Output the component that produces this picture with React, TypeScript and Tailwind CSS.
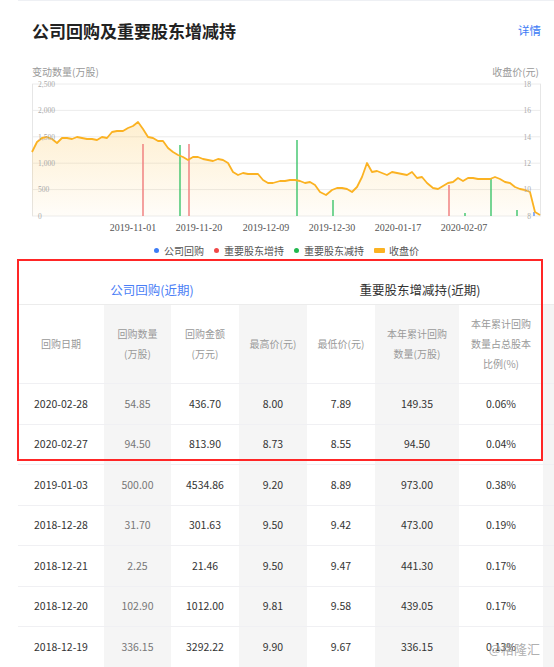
import React from 'react';

const pricePoints: [number, number][] = [
  [32, 152], [37, 142], [42, 138], [47, 137], [52, 139], [57, 143], [62, 138], [67, 138], [72, 139], [77, 137],
  [82, 138], [87, 139], [92, 139], [97, 140], [102, 137], [107, 138], [112, 132], [117, 131], [123, 131], [128, 128],
  [133, 126], [138, 122], [143, 129], [148, 137], [153, 138], [158, 141], [163, 141], [168, 148], [173, 152], [178, 155],
  [183, 157], [188, 160], [193, 157], [198, 157], [203, 159], [208, 160], [213, 161], [218, 159], [223, 160], [228, 163],
  [233, 172], [238, 175], [243, 173], [248, 174], [253, 174], [258, 174], [263, 180], [268, 183], [273, 183], [280, 181],
  [285, 181], [290, 180], [295, 180], [300, 181], [305, 183], [310, 182], [315, 185], [320, 192], [326, 195], [332, 190],
  [337, 188], [342, 188], [347, 189], [352, 192], [357, 187], [362, 177], [367, 163], [372, 172], [377, 171], [382, 173],
  [387, 175], [392, 172], [397, 173], [402, 174], [407, 175], [412, 172], [417, 178], [422, 177], [427, 183], [433, 188],
  [438, 189], [443, 186], [448, 183], [453, 182], [458, 178], [463, 181], [468, 178], [473, 178], [478, 179], [483, 179],
  [490, 179], [495, 177], [500, 179], [505, 182], [510, 183], [515, 187], [520, 189], [525, 190], [530, 192], [535, 212],
  [540, 215],
];

// x, top y, colour
const bars: [number, number, string][] = [
  [143, 144, '#f07a7a'],
  [180, 145, '#3cc46a'],
  [189, 144, '#f07a7a'],
  [297, 140, '#3cc46a'],
  [333, 200, '#3cc46a'],
  [449, 185, '#f07a7a'],
  [465, 213, '#3cc46a'],
  [491, 179, '#3cc46a'],
  [517, 210, '#3cc46a'],
  [534, 212, '#5b8ff9'],
];

const leftTicks = ['2,500', '2,000', '1,500', '1,000', '500', '0'];
const rightTicks = ['18', '16', '14', '12', '10', '8'];
const dates: [string, number][] = [
  ['2019-11-01', 133],
  ['2019-11-20', 199],
  ['2019-12-09', 266],
  ['2019-12-30', 332],
  ['2020-01-17', 398],
  ['2020-02-07', 464],
];

const rows = [
  ['2020-02-28', '54.85', '436.70', '8.00', '7.89', '149.35', '0.06%'],
  ['2020-02-27', '94.50', '813.90', '8.73', '8.55', '94.50', '0.04%'],
  ['2019-01-03', '500.00', '4534.86', '9.20', '8.89', '973.00', '0.38%'],
  ['2018-12-28', '31.70', '301.63', '9.50', '9.42', '473.00', '0.19%'],
  ['2018-12-21', '2.25', '21.46', '9.50', '9.47', '441.30', '0.17%'],
  ['2018-12-20', '102.90', '1012.00', '9.81', '9.58', '439.05', '0.17%'],
  ['2018-12-19', '336.15', '3292.22', '9.90', '9.67', '336.15', '0.13%'],
];

const cols = 'grid grid-cols-[86px_67px_68px_68px_68px_84px_84px_11px]';

function Chart() {
  const line = pricePoints.map(([x, y], i) => `${i ? 'L' : 'M'}${x} ${y}`).join(' ');
  const area = `${line} L540 216 L32 216 Z`;
  return (
    <svg width={554} height={159} viewBox="0 81 554 159" className="block">
      <defs>
        <linearGradient id="priceFill" x1="0" y1="0" x2="0" y2="1">
          <stop offset="0%" stopColor="#fbb62a" stopOpacity="0.22" />
          <stop offset="100%" stopColor="#fbb62a" stopOpacity="0.03" />
        </linearGradient>
      </defs>
      {leftTicks.map((_, i) => (
        <line key={i} x1={32} x2={541} y1={84 + i * 26.4} y2={84 + i * 26.4} stroke="#ececec" strokeWidth={1} />
      ))}
      <line x1={32.5} x2={32.5} y1={84} y2={216} stroke="#e6e6e6" />
      <line x1={540.5} x2={540.5} y1={84} y2={216} stroke="#e6e6e6" />
      <path d={area} fill="url(#priceFill)" />
      {bars.map(([x, top, c], i) => (
        <line key={i} x1={x} x2={x} y1={216} y2={top} stroke={c} strokeWidth={1.4} />
      ))}
      <path d={line} fill="none" stroke="#fbb222" strokeWidth={1.8} strokeLinejoin="round" />
      {leftTicks.map((t, i) => (
        <text key={t} x={38} y={84 + i * 26.4 + 2.8} fontSize={7.5} fill="#aaa" fontFamily="'Liberation Serif', serif">
          {t}
        </text>
      ))}
      {rightTicks.map((t, i) => (
        <text key={t} x={531} y={84 + i * 26.4 + 2.8} fontSize={7.5} fill="#aaa" textAnchor="end" fontFamily="'Liberation Serif', serif">
          {t}
        </text>
      ))}
      {dates.map(([d, x]) => (
        <text key={d} x={x} y={231} fontSize={10} fill="#555" textAnchor="middle" fontFamily="'Liberation Serif', serif">
          {d}
        </text>
      ))}
    </svg>
  );
}

function Legend() {
  return (
    <div className="ml-[32px] w-[509px] h-[20px] flex items-center justify-center gap-[10px] text-[10px] text-[#555]">
      <div className="flex items-center gap-[5px]">
        <span className="w-[5px] h-[5px] rounded-full bg-[#3d7cf5]" />
        <span>公司回购</span>
      </div>
      <div className="flex items-center gap-[5px]">
        <span className="w-[5px] h-[5px] rounded-full bg-[#f04848]" />
        <span>重要股东增持</span>
      </div>
      <div className="flex items-center gap-[5px]">
        <span className="w-[5px] h-[5px] rounded-full bg-[#22b84f]" />
        <span>重要股东减持</span>
      </div>
      <div className="flex items-center gap-[4px]">
        <span className="w-[11px] h-[5px] rounded-[1px] bg-[#fbb222]" />
        <span>收盘价</span>
      </div>
    </div>
  );
}

function Table() {
  const shade = (i: number) => (i % 2 === 1 ? 'bg-[#f5f5f5]' : '');
  const headers: React.ReactNode[] = [
    '回购日期',
    <>回购数量<br />(万股)</>,
    <>回购金额<br />(万元)</>,
    '最高价(元)',
    '最低价(元)',
    <>本年累计回购<br />数量(万股)</>,
    <>本年累计回购<br />数量占总股本<br />比例(%)</>,
    '',
  ];
  return (
    <div className="ml-[18px] w-[536px]">
      <div className="h-[45px] flex border-b border-[#ececec] text-[12.5px]">
        <div className="w-1/2 flex items-center justify-center pt-[16px] text-[#4a7ef6]">公司回购(近期)</div>
        <div className="w-1/2 flex items-center justify-center pt-[16px] text-[#333]">重要股东增减持(近期)</div>
      </div>
      <div className={`${cols} h-[79px] border-b border-[#f0f0f3] text-[10px] leading-[20px] text-[#999]`}>
        {headers.map((h, i) => (
          <div key={i} className={`flex items-center justify-center text-center ${shade(i)}`}>
            <div>{h}</div>
          </div>
        ))}
      </div>
      {rows.map((r) => (
        <div key={r[0]} className={`${cols} h-[40.5px] border-b border-[#f0f0f3] text-[10.5px]`}>
          {[...r, ''].map((v, i) => (
            <div
              key={i}
              className={`flex items-center justify-center ${shade(i)} ${i === 1 ? 'text-[#777]' : 'text-[#333]'}`}
            >
              {v}
            </div>
          ))}
        </div>
      ))}
    </div>
  );
}

export default function App() {
  return (
    <div className="relative w-[554px] h-[667px] overflow-hidden bg-white font-['Noto_Sans_CJK_SC',sans-serif]">
      <div className="ml-[18px] h-px bg-[#eef0f4]" />
      <div className="h-[60px] flex items-center justify-between pl-[32px] pr-[13px]">
        <h2 className="text-[17px] font-bold text-[#222]">公司回购及重要股东增减持</h2>
        <span className="text-[11.5px] text-[#3d7cf5]">详情</span>
      </div>
      <div className="h-[20px] flex items-center justify-between pl-[32px] pr-[15px] text-[10px] text-[#999]">
        <span>变动数量(万股)</span>
        <span>收盘价(元)</span>
      </div>
      <Chart />
      <Legend />
      <Table />
      <div className="absolute left-[17px] top-[259px] w-[526px] h-[202px] border-2 border-[#ff2626]" />
      <div className="absolute right-[14px] bottom-[9px] text-[13px] text-[#9a9a9a]/80">@格隆汇</div>
    </div>
  );
}
